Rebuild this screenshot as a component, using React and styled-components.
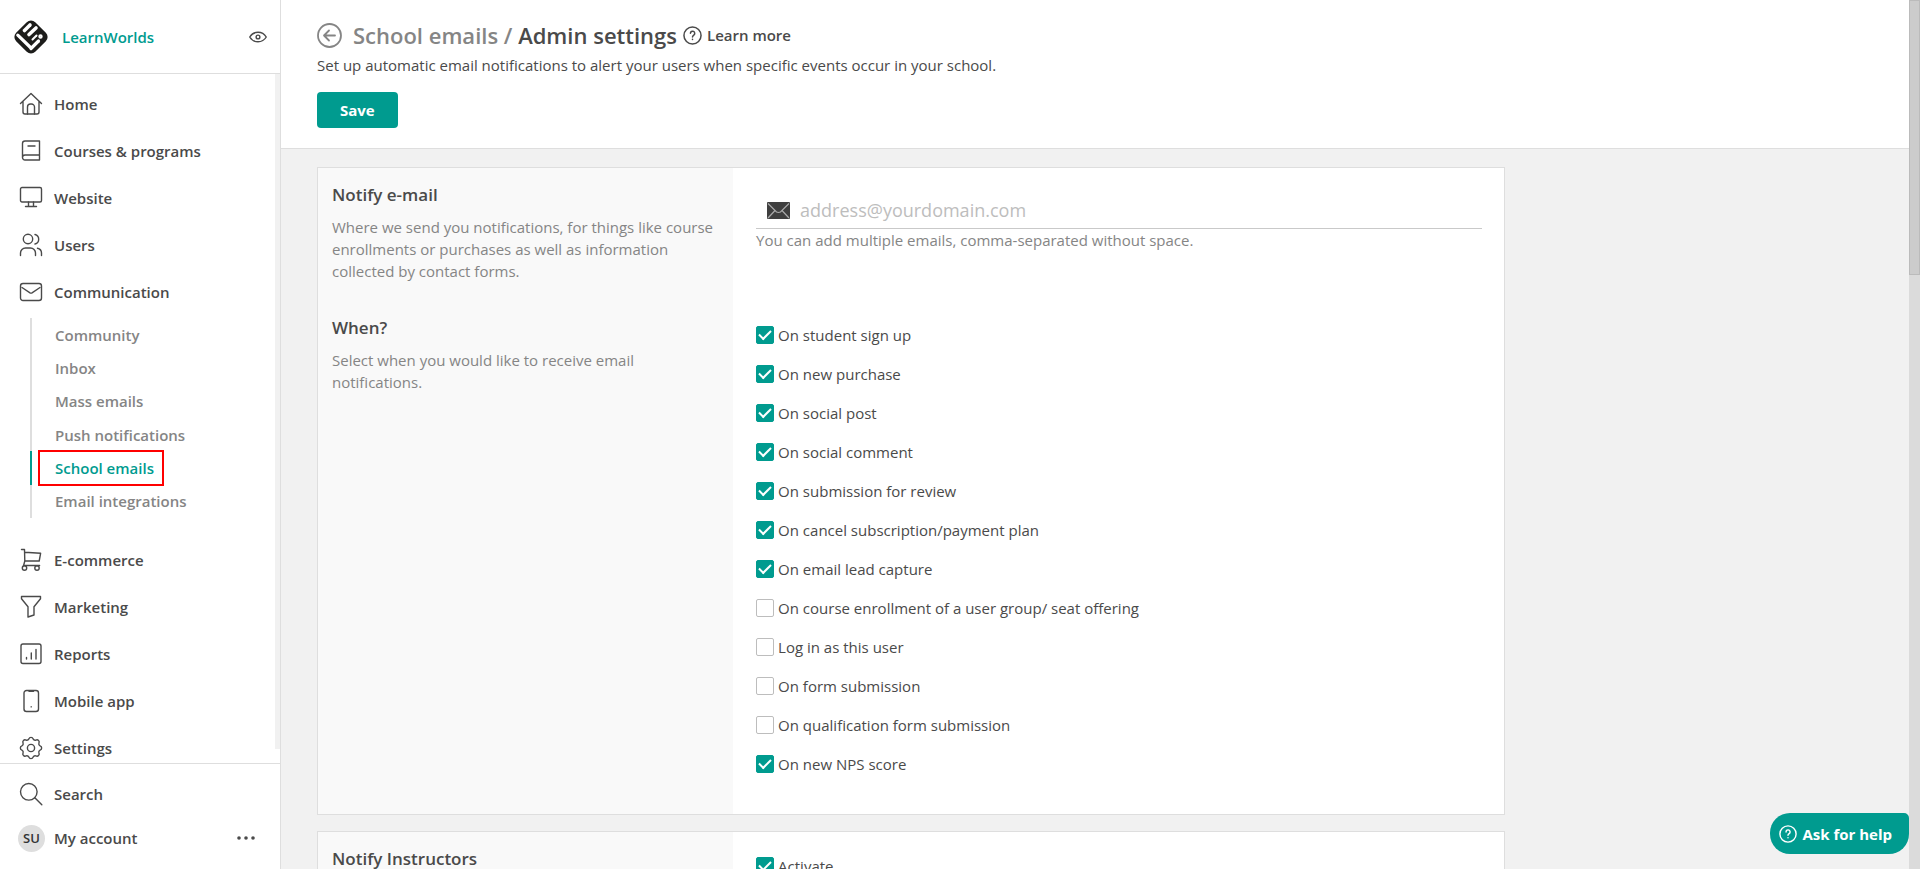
import React, { useState } from "react";
import styled, { createGlobalStyle } from "styled-components";

const GlobalStyle = createGlobalStyle`
  * {
    box-sizing: border-box;
  }
  body {
    margin: 0;
    background: #f1f1f1;
    color: #4a4a4a;
    font-family: "Open Sans", "Noto Sans", sans-serif;
    font-size: 15px;
    line-height: 22px;
  }
  input, button {
    font-family: inherit;
  }
  a {
    color: inherit;
    text-decoration: none;
  }
`;

const Page = styled.div`
  display: flex;
  height: 100vh;
  overflow: hidden;
`;

/* sidebar */
const Sidebar = styled.aside`
  flex: 0 0 281px;
  display: flex;
  flex-direction: column;
  background: #fff;
  border-right: 1px solid #dedede;
`;
const Brand = styled.div`
  display: flex;
  align-items: center;
  height: 74px;
  padding: 0 13px 0 12px;
  border-bottom: 1px solid #dedede;
`;
const BrandName = styled.a`
  flex: 1;
  margin-left: 12px;
  color: #009b8f;
  font-weight: 600;
`;
const IconButton = styled.button`
  display: flex;
  padding: 0;
  border: 0;
  background: none;
  color: inherit;
  cursor: pointer;
`;
const NavWrapper = styled.div`
  flex: 1;
  display: flex;
  min-height: 0;
  overflow: hidden;
`;
const Nav = styled.nav`
  flex: 1;
  padding-top: 6px;
`;
const NavTrack = styled.div`
  width: 5px;
  margin-bottom: 14px;
  background: #f1f1f1;
`;
const NavItem = styled.a`
  display: flex;
  align-items: center;
  gap: 11px;
  height: ${(props) => props.$height || "47px"};
  padding: 0 25px 0 19px;
  font-weight: 600;
`;
const SubNav = styled.div`
  display: grid;
  grid-auto-rows: 1fr;
  height: 200px;
  margin: 3px 0 18px 30px;
`;
const SubItem = styled.a`
  display: flex;
  align-items: center;
  padding-left: 8px;
  border-left: 2px solid ${(props) => (props.$active ? "#009b8f" : "#dedede")};
  color: ${(props) => (props.$active ? "#009b8f" : "#858585")};
  font-weight: 600;
`;
const SubLabel = styled.span`
  padding: 5px 8px 5px 15px;
  outline: ${(props) => (props.$marked ? "2px solid #f00" : "none")};
`;
const SidebarFooter = styled.div`
  height: 106px;
  padding-top: 8px;
  border-top: 1px solid #dedede;
`;
const Avatar = styled.span`
  display: flex;
  align-items: center;
  justify-content: center;
  width: 27px;
  height: 27px;
  margin: 0 -2px 0 -1px;
  border-radius: 50%;
  background: #dedede;
  color: #333;
  font-size: 13px;
`;
const Grow = styled.span`
  flex: 1;
`;

/* content */
const Main = styled.main`
  flex: 1;
  min-width: 0;
  overflow: hidden;
`;
const Header = styled.header`
  height: 149px;
  padding: 18px 36px 0;
  background: #fff;
  border-bottom: 1px solid #dedede;
`;
const TitleRow = styled.div`
  display: flex;
  align-items: center;
  height: 34px;
`;
const Title = styled.h1`
  margin: 0 6px 0 11px;
  font-size: 22px;
  font-weight: 600;
  line-height: 34px;
`;
const Crumb = styled.a`
  color: #858585;
`;
const LearnMore = styled.a`
  display: flex;
  align-items: center;
  gap: 5px;
  font-weight: 600;
`;
const Intro = styled.p`
  margin: 2px 0 16px;
`;
const SaveButton = styled.button`
  height: 36px;
  padding: 0 23px;
  border: 0;
  border-radius: 4px;
  background: #009b8f;
  color: #fff;
  font-size: 15px;
  font-weight: 700;
  cursor: pointer;
`;
const Content = styled.div`
  padding: 18px 36px;
`;
const Card = styled.section`
  max-width: 1188px;
  margin-bottom: 16px;
  border: 1px solid #dedede;
  background: linear-gradient(to right, #f9f9f9 35%, #fff 35%);
`;
const Row = styled.div`
  display: grid;
  grid-template-columns: 35% 65%;
`;
const Info = styled.div`
  padding: 15px 14px 19px;
`;
const InfoTitle = styled.h2`
  margin: 0 0 9px;
  font-size: 17px;
  font-weight: 600;
  line-height: 24px;
`;
const InfoText = styled.p`
  margin: 0;
  color: #858585;
`;
const Fields = styled.div`
  padding: ${(props) => props.$padding || "14px 22px 31px 23px"};
`;
const EmailField = styled.label`
  display: flex;
  align-items: center;
  gap: 10px;
  height: 37px;
  padding-left: 11px;
  border-bottom: 1px solid #c9c9c9;
`;
const EmailInput = styled.input`
  flex: 1;
  padding: 0;
  border: 0;
  outline: 0;
  background: none;
  color: #4a4a4a;
  font-size: 18px;
  &::placeholder {
    color: #bdbdbd;
    opacity: 1;
  }
`;
const Hint = styled.p`
  margin: 0;
  color: #858585;
`;
const CheckRow = styled.label`
  display: flex;
  align-items: center;
  gap: 4px;
  height: 39px;
  cursor: pointer;
`;
const Checkbox = styled.input`
  appearance: none;
  display: grid;
  place-content: center;
  width: 18px;
  height: 18px;
  margin: 0;
  border: 1px solid #bdbdbd;
  border-radius: 2px;
  background: #fff;
  &:checked {
    border-color: #009b8f;
    background: #009b8f;
  }
  &:checked::before {
    content: "";
    width: 10px;
    height: 5px;
    margin-bottom: 3px;
    border-left: 2px solid #fff;
    border-bottom: 2px solid #fff;
    transform: rotate(-45deg);
  }
`;
const ScrollTrack = styled.div`
  flex: 0 0 11px;
  background: #dbdbdb;
`;
const ScrollThumb = styled.div`
  height: 275px;
  border: 1px solid #bbb;
  background: #ccc;
`;
const HelpButton = styled.button`
  position: fixed;
  right: 11px;
  bottom: 15px;
  display: flex;
  align-items: center;
  gap: 5px;
  height: 41px;
  padding: 0 17px 0 9px;
  border: 0;
  border-radius: 20px 5px 20px 20px;
  background: #009b8f;
  color: #fff;
  font-size: 15px;
  font-weight: 700;
  cursor: pointer;
`;

const StrokeSvg = styled.svg`
  flex-shrink: 0;
  fill: none;
  stroke: currentColor;
  stroke-linecap: round;
  stroke-linejoin: round;
`;

const Icon = ({ children, size = 24, width = 1.4 }) => (
  <StrokeSvg width={size} height={size} viewBox="0 0 24 24" strokeWidth={width} aria-hidden="true">
    {children}
  </StrokeSvg>
);

const HelpIcon = ({ size }) => (
  <Icon size={size} width={1.9}>
    <circle cx="12" cy="12" r="10.8" />
    <path d="M9.4 9.3a2.7 2.7 0 1 1 4.2 2.2c-1.1.8-1.6 1.2-1.6 2.3M12 16.8v.2" />
  </Icon>
);

const Logo = () => (
  <svg width="38" height="38" viewBox="0 0 38 38" aria-hidden="true">
    <rect x="5.5" y="5.5" width="27" height="27" rx="6" fill="#1d1d1b" transform="rotate(45 19 19)" />
    <g fill="none" stroke="#fff" strokeLinecap="round" strokeLinejoin="round">
      <path d="M12.5 12.5 18 7" strokeWidth="3.6" />
      <path d="m17 16.500 7-6.500" strokeWidth="3.6" />
      <path d="m5.800 17.200 12.200 11.800" strokeWidth="3.2" />
      <path d="m19 30.500 7.500-7.500" strokeWidth="3.2" />
      <path d="m20.500 21.500 4-4" strokeWidth="2" />
      <circle cx="28.500" cy="18.500" r="1" strokeWidth="2.4" />
    </g>
  </svg>
);

const icons = {
  home: (
    <>
      <path d="M1.5 11.5 12 1.5l10.5 10M4 9.5V20a2 2 0 0 0 2 2h12a2 2 0 0 0 2-2V9.5" />
      <path d="M8.5 22v-7a3 3 0 0 1 3-3h1a3 3 0 0 1 3 3v7" />
    </>
  ),
  courses: (
    <path d="M20.5 2H6a2.5 2.5 0 0 0-2.5 2.5v14A2.5 2.5 0 0 0 6 21h14.5zM20.5 16H6a2.5 2.5 0 0 0-2.5 2.5M9 7h7" />
  ),
  website: (
    <>
      <rect x="1.5" y="1.5" width="21" height="14.5" rx="1.5" />
      <path d="M9.5 16v4.5M14.5 16v4.5M6.5 20.5h11" />
    </>
  ),
  users: (
    <>
      <circle cx="9" cy="6" r="4.7" />
      <path d="M1.5 22.5V20a5 5 0 0 1 5-5h5a5 5 0 0 1 5 5v2.5M16 1.5a4.9 4.9 0 0 1 0 9.5M18.5 15.2a5 5 0 0 1 4 4.8v2.5" />
    </>
  ),
  communication: (
    <>
      <rect x="1.5" y="3.5" width="21" height="17" rx="2.5" />
      <path d="m3 7.5 8 5.3a2 2 0 0 0 2 0l8-5.3" />
    </>
  ),
  ecommerce: (
    <>
      <path d="M2.5 1.5h3l.3 11.5M5.6 4.3l16 1-1.4 7.7H5.8l-1.2 4.5h16" />
      <circle cx="5.5" cy="20" r="2.2" />
      <circle cx="18" cy="20" r="2.2" />
    </>
  ),
  marketing: <path d="M2.5 1.5h19v2.2l-6.5 8V20l-6 2V11.7l-6.5-8z" />,
  reports: (
    <>
      <rect x="2" y="2" width="20" height="19.5" rx="2" />
      <path d="M7.5 15.5v1.5M12.3 11v6M17 7.5V17" />
    </>
  ),
  mobile: (
    <>
      <rect x="5" y="1.5" width="14.5" height="21" rx="2.5" />
      <path d="M10 2.3h4.5M12.2 17.8v.1" />
    </>
  ),
  settings: (
    <>
      <path d="M21.1 9.9A2.2 2.2 0 0 1 21.1 14.1A2.4 2.4 0 0 0 19.9 16.9A2.2 2.2 0 0 1 16.9 19.9A2.4 2.4 0 0 0 14.1 21.1A2.2 2.2 0 0 1 9.9 21.1A2.4 2.4 0 0 0 7.1 19.9A2.2 2.2 0 0 1 4.1 16.9A2.4 2.4 0 0 0 2.9 14.1A2.2 2.2 0 0 1 2.9 9.9A2.4 2.4 0 0 0 4.1 7.1A2.2 2.2 0 0 1 7.1 4.1A2.4 2.4 0 0 0 9.9 2.9A2.2 2.2 0 0 1 14.1 2.9A2.4 2.4 0 0 0 16.9 4.1A2.2 2.2 0 0 1 19.9 7.1A2.4 2.4 0 0 0 21.1 9.9z" />
      <circle cx="12" cy="12" r="3.6" />
    </>
  ),
  search: (
    <>
      <circle cx="9.8" cy="9.8" r="8.3" />
      <path d="m15.8 15.8 7 7" />
    </>
  ),
};

const mainNav = [
  { id: "home", label: "Home" },
  { id: "courses", label: "Courses & programs" },
  { id: "website", label: "Website" },
  { id: "users", label: "Users" },
  {
    id: "communication",
    label: "Communication",
    children: ["Community", "Inbox", "Mass emails", "Push notifications", "School emails", "Email integrations"],
  },
  { id: "ecommerce", label: "E-commerce" },
  { id: "marketing", label: "Marketing" },
  { id: "reports", label: "Reports" },
  { id: "mobile", label: "Mobile app" },
  { id: "settings", label: "Settings" },
];

const initialEvents = [
  { label: "On student sign up", checked: true },
  { label: "On new purchase", checked: true },
  { label: "On social post", checked: true },
  { label: "On social comment", checked: true },
  { label: "On submission for review", checked: true },
  { label: "On cancel subscription/payment plan", checked: true },
  { label: "On email lead capture", checked: true },
  { label: "On course enrollment of a user group/ seat offering", checked: false },
  { label: "Log in as this user", checked: false },
  { label: "On form submission", checked: false },
  { label: "On qualification form submission", checked: false },
  { label: "On new NPS score", checked: true },
];

const App = () => {
  const [events, setEvents] = useState(initialEvents);
  const [instructors, setInstructors] = useState(true);
  const [email, setEmail] = useState("");

  const toggle = (index) => {
    setEvents(events.map((item, i) => (i === index ? { ...item, checked: !item.checked } : item)));
  };

  return (
    <Page>
      <GlobalStyle />
      <Sidebar>
        <Brand>
          <Logo />
          <BrandName href="#">LearnWorlds</BrandName>
          <IconButton aria-label="Preview school">
            <Icon size={18} width={1.9}>
              <path d="M1 12c5-8.5 17-8.5 22 0-5 8.5-17 8.5-22 0z" />
              <circle cx="12" cy="12" r="2.5" />
            </Icon>
          </IconButton>
        </Brand>
        <NavWrapper>
          <Nav>
            {mainNav.map((item) => (
              <React.Fragment key={item.id}>
                <NavItem href="#">
                  <Icon>{icons[item.id]}</Icon>
                  {item.label}
                </NavItem>
                {item.children && (
                  <SubNav>
                    {item.children.map((child) => (
                      <SubItem href="#" key={child} $active={child === "School emails"}>
                        <SubLabel $marked={child === "School emails"}>{child}</SubLabel>
                      </SubItem>
                    ))}
                  </SubNav>
                )}
              </React.Fragment>
            ))}
          </Nav>
          <NavTrack />
        </NavWrapper>
        <SidebarFooter>
          <NavItem href="#" $height="44px">
            <Icon>{icons.search}</Icon>
            Search
          </NavItem>
          <NavItem href="#" $height="44px">
            <Avatar>SU</Avatar>
            My account
            <Grow />
            <svg width="18" height="4" viewBox="0 0 18 4" fill="currentColor" aria-hidden="true">
              <circle cx="2" cy="2" r="1.8" />
              <circle cx="9" cy="2" r="1.8" />
              <circle cx="16" cy="2" r="1.8" />
            </svg>
          </NavItem>
        </SidebarFooter>
      </Sidebar>

      <Main>
        <Header>
          <TitleRow>
            <IconButton aria-label="Back">
              <svg width="25" height="25" viewBox="0 0 25 25" fill="none" stroke="#858585" strokeWidth="1.8" strokeLinecap="round" strokeLinejoin="round">
                <circle cx="12.5" cy="12.5" r="11.5" />
                <path d="M18 12.5H7M12 7.5l-5 5 5 5" />
              </svg>
            </IconButton>
            <Title>
              <Crumb href="#">School emails / </Crumb>
              Admin settings
            </Title>
            <LearnMore href="#">
              <HelpIcon size={19} />
              Learn more
            </LearnMore>
          </TitleRow>
          <Intro>Set up automatic email notifications to alert your users when specific events occur in your school.</Intro>
          <SaveButton>Save</SaveButton>
        </Header>
        <Content>
          <Card>
            <Row>
              <Info>
                <InfoTitle>Notify e-mail</InfoTitle>
                <InfoText>
                  Where we send you notifications, for things like course enrollments or purchases as well as information
                  collected by contact forms.
                </InfoText>
              </Info>
              <Fields $padding="24px 22px 0 23px">
                <EmailField>
                  <svg width="23" height="17" viewBox="0 0 23 17" aria-hidden="true">
                    <rect width="23" height="17" rx="1" fill="#3f3f3f" />
                    <path d="M1 1.5 9.5 10l2 .5 2-.5L22 1.5M1 16l7-7.5M22 16l-7-7.5" fill="none" stroke="#aaa" strokeWidth="1.2" />
                  </svg>
                  <EmailInput
                    type="text"
                    aria-label="Notify e-mail"
                    placeholder="address@yourdomain.com"
                    value={email}
                    onChange={(e) => setEmail(e.target.value)}
                  />
                </EmailField>
                <Hint>You can add multiple emails, comma-separated without space.</Hint>
              </Fields>
            </Row>
            <Row>
              <Info>
                <InfoTitle>When?</InfoTitle>
                <InfoText>Select when you would like to receive email notifications.</InfoText>
              </Info>
              <Fields>
                {events.map((item, index) => (
                  <CheckRow key={item.label}>
                    <Checkbox type="checkbox" checked={item.checked} onChange={() => toggle(index)} />
                    {item.label}
                  </CheckRow>
                ))}
              </Fields>
            </Row>
          </Card>
          <Card>
            <Row>
              <Info>
                <InfoTitle>Notify Instructors</InfoTitle>
              </Info>
              <Fields>
                <CheckRow>
                  <Checkbox type="checkbox" checked={instructors} onChange={() => setInstructors(!instructors)} />
                  Activate
                </CheckRow>
              </Fields>
            </Row>
          </Card>
        </Content>
      </Main>
      <ScrollTrack>
        <ScrollThumb />
      </ScrollTrack>
      <HelpButton>
        <HelpIcon size={18} />
        Ask for help
      </HelpButton>
    </Page>
  );
};

export default App;
